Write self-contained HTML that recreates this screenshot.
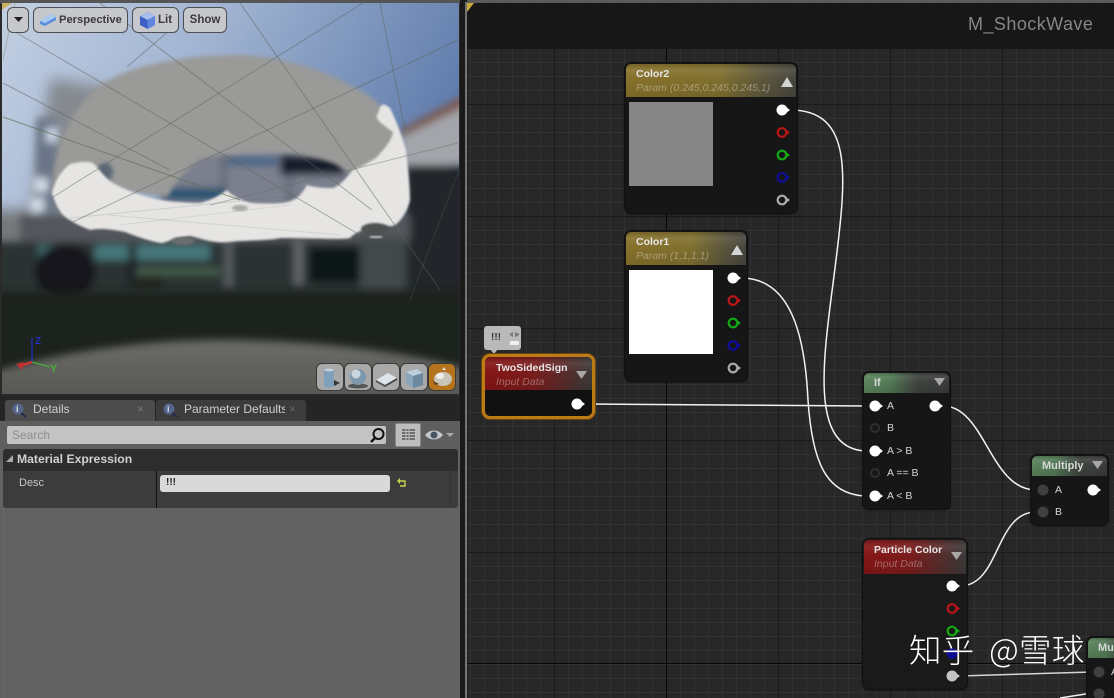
<!DOCTYPE html>
<html><head><meta charset="utf-8"><style>
html,body{margin:0;padding:0;width:1114px;height:698px;overflow:hidden;background:#1c1c1c}
*{box-sizing:border-box}
body{font-family:"Liberation Sans","Noto Sans CJK SC",sans-serif;position:relative}
.a{position:absolute}
.tb{position:absolute;top:7px;height:26px;background:#c6c8cc;border:1px solid #4c4f54;border-radius:6px;font-weight:bold;font-size:11.5px;color:#3a3a3a;line-height:24px}
.vb{position:absolute;top:364px;width:26px;height:26px;background:#a9a9a9;border-radius:5px;box-shadow:0 0 0 1px #3a3a3a}
.node{position:absolute;background:#161616;border-radius:6px;box-shadow:0 0 0 1px #101010,0 1px 3px rgba(0,0,0,.5)}
.hd{position:absolute;left:1px;right:1px;top:1px;border-radius:5px 5px 0 0;overflow:hidden}
.hd:after{content:"";position:absolute;left:0;right:0;top:0;height:100%;background:linear-gradient(180deg,rgba(0,0,0,.12),rgba(255,255,255,.08) 18%,rgba(255,255,255,0) 45%,rgba(0,0,0,.1) 100%)}
.gold{background:linear-gradient(90deg,#87712a,#80702f 55%,#5b553d 82%,#47453f)}
.red{background:linear-gradient(90deg,#861616,#7a1c1c 45%,#4f3030 82%,#3d3a3a)}
.green{background:linear-gradient(90deg,#5b835b,#527a56 30%,#3f443f 62%,#3a3a3a)}
.t{position:absolute;font-weight:bold;font-size:10.5px;color:#e6e6e6;white-space:nowrap;z-index:2}
.s{position:absolute;font-style:italic;font-size:10.5px;color:rgba(255,255,255,.34);white-space:nowrap;z-index:2}
.l{position:absolute;font-size:10.5px;color:#d6d6d6;white-space:nowrap;z-index:5}
</style></head><body>

<!-- Viewport -->
<svg class="a" style="left:0;top:0" width="461" height="396" viewBox="0 0 461 396">
<defs>
<linearGradient id="sky" x1="0" y1="0" x2="1" y2="0.35"><stop offset="0" stop-color="#c3d0e3"/><stop offset=".45" stop-color="#a0b3d1"/><stop offset="1" stop-color="#5e7bab"/></linearGradient>
<linearGradient id="gnd" x1="0" y1="0" x2="0" y2="1"><stop offset="0" stop-color="#6c6c67"/><stop offset=".6" stop-color="#5b5b57"/><stop offset="1" stop-color="#4f4f4c"/></linearGradient>
<filter id="b8" x="-40%" y="-40%" width="180%" height="180%"><feGaussianBlur stdDeviation="7"/></filter>
<filter id="b4" x="-30%" y="-30%" width="160%" height="160%"><feGaussianBlur stdDeviation="4"/></filter>
<filter id="b2" x="-20%" y="-20%" width="140%" height="140%"><feGaussianBlur stdDeviation="2"/></filter>
<filter id="b1" x="-10%" y="-10%" width="120%" height="120%"><feGaussianBlur stdDeviation="1"/></filter>
<clipPath id="vp"><rect x="2" y="3" width="457" height="391"/></clipPath>
</defs>
<rect width="461" height="396" fill="#2a2a2a"/>
<g clip-path="url(#vp)">
<rect x="0" y="0" width="461" height="300" fill="url(#sky)"/>
<g filter="url(#b8)">
<path d="M50 78L110 88 120 200 80 250 30 215Z" fill="#858a90"/>
<path d="M-20 210H60V260H-20Z" fill="#74787a"/>
</g>
<g filter="url(#b4)">
<rect x="36" y="118" width="20" height="100" fill="#6a7688"/>
<rect x="46" y="128" width="12" height="14" fill="#c9d5e6"/>
<rect x="34" y="178" width="14" height="14" fill="#d0dbe8"/>
<rect x="30" y="198" width="14" height="14" fill="#d0dbe8"/>
<path d="M400 130L470 92 470 104 402 138Z" fill="#7c584e"/>
<path d="M400 138L470 104 470 162 405 170Z" fill="#a2a5aa"/>
<path d="M405 165H480V320H405Z" fill="#22272b"/>
<path d="M20 215H410V245H20Z" fill="#53575c"/>
<path d="M-20 242H410V320H-20Z" fill="#2b3033"/>
<path d="M160 150H360V215H160Z" fill="#7b808e"/>
<rect x="220" y="150" width="7" height="60" fill="#666c7a"/>
<rect x="286" y="150" width="7" height="60" fill="#666c7a"/>
<rect x="228" y="158" width="50" height="7" fill="#2d5d85"/>
<rect x="165" y="188" width="60" height="12" fill="#164f70"/>
<rect x="280" y="155" width="65" height="20" fill="#141e2a"/>
<rect x="38" y="245" width="20" height="12" fill="#3f6a6c"/>
<rect x="95" y="245" width="115" height="15" fill="#46777a"/>
<rect x="135" y="268" width="85" height="7" fill="#46604f"/>
<rect x="128" y="245" width="9" height="42" fill="#1a2020" opacity=".7"/>
<rect x="224" y="240" width="9" height="48" fill="#565c60"/>
<rect x="294" y="240" width="9" height="45" fill="#63676b"/>
<rect x="310" y="248" width="50" height="34" fill="#0f1315"/>
<rect x="360" y="238" width="45" height="52" fill="#42484c"/>
<ellipse cx="65" cy="272" rx="30" ry="28" fill="#12171a"/>
<ellipse cx="150" cy="282" rx="16" ry="7" fill="#20261f"/>
</g>
<path d="M-20 292H481V380H-20Z" fill="#1e231f" filter="url(#b4)"/>
<path d="M-20 376C60 350 160 338 240 340 330 342 410 352 481 372V416H-20Z" fill="url(#gnd)" filter="url(#b4)"/>
<!-- gray dome -->
<path d="M52 192C54 150 68 112 100 85C125 68 175 55 240 55C290 56 345 78 375 100C392 118 402 140 405 165L370 175 347 172C335 160 300 153 283 153 250 153 215 153 200 160C185 170 175 182 168 196L110 190 60 198Z" fill="#9a9a98" filter="url(#b2)"/>
<ellipse cx="105" cy="172" rx="8" ry="9" fill="#5a6676" filter="url(#b2)"/>
<!-- white band -->
<path d="M52 193C55 180 62 170 70 164 78 162 88 161 93 163 100 170 105 178 113 183 125 190 145 197 160 200 175 202 190 203 200 203 212 200 220 195 227 190 233 197 245 202 253 203 270 204 285 204 293 200 300 197 304 190 307 185 312 187 322 188 333 188 342 185 348 175 353 170 365 165 373 160 377 157 385 148 392 140 393 132 386 127 372 118 378 114 380 108 380 100 390 108 397 123 400 130 406 150 408 167 410 185 410 200 408 211 400 222 395 225 390 228 380 224 370 226 363 231 355 232 350 238 343 240 310 238 280 238 267 241 245 240 230 242 213 244 200 238 190 236 173 238 168 242 162 243 157 243 140 238 125 232 110 229 100 228 90 230 83 227 70 222 62 214 57 207 54 200 52 193 52 193Z" fill="#e6e5e3" filter="url(#b1)"/>
<ellipse cx="240" cy="208" rx="8" ry="3" fill="#a9a9a7" filter="url(#b1)"/>
<ellipse cx="375" cy="229" rx="14" ry="6" fill="#4d5252" filter="url(#b1)"/>
<ellipse cx="183" cy="241" rx="12" ry="4" fill="#6b6e6e" filter="url(#b1)"/>
<rect x="370" y="236" width="12" height="2" fill="#d8d8d8" filter="url(#b1)"/>
<!-- grid lines -->
<g fill="none" stroke="#5e645c" stroke-opacity=".5" stroke-width="1">
<path d="M17 33L360 235"/><path d="M100 3L372 210"/><path d="M240 3L440 290"/><path d="M380 3L405 130"/>
<path d="M363 3L53 197"/><path d="M458 40L60 228"/><path d="M3 83L170 170"/><path d="M170 30L127 67"/>
<path d="M458 143L210 205" stroke-opacity=".4"/><path d="M459 170L410 300" stroke-opacity=".3"/>
<path d="M108 215L340 235" stroke-opacity=".15"/><path d="M70 218L300 195" stroke-opacity=".18"/><path d="M120 225L290 205" stroke-opacity=".12"/>
<path d="M3 117L240 200" stroke="#586e4e" stroke-opacity=".65"/><path d="M15 3L3 60" stroke="#7d9372"/>
</g>
<!-- axes -->
<path d="M32 362V338" stroke="#1c2fc0" stroke-width="1.400"/><path d="M32 362L20 366" stroke="#d03030" stroke-width="2.400"/><path d="M32 362L50 367" stroke="#45b03a" stroke-width="1.200"/>
<text x="35" y="344" font-family="Liberation Sans" font-size="10" font-weight="bold" fill="#2030c0">Z</text>
<text x="50" y="372" font-family="Liberation Sans" font-size="11" font-weight="bold" fill="#45b03a">Y</text>
<path d="M16 364L24 362 22 370Z" fill="#c03030"/>
</g>
<path d="M2 3H12L2 10Z" fill="#c9a93c" opacity=".8"/>
</svg>
<div class="a" style="left:0;top:0;width:461px;height:3px;background:#555"></div>

<div class="tb" style="left:7px;width:22px"><svg class="a" style="left:5px;top:9px" width="11" height="6"><path d="M1 0H10L5.500 5Z" fill="#222"/></svg></div>
<div class="tb" style="left:33px;width:95px;padding-left:25px;font-size:11.2px">Perspective<svg class="a" style="left:5px;top:5px" width="18" height="14" viewBox="0 0 18 14"><path d="M1 8L12 1 17 4 17 7 6 13 1 11Z" fill="#5b90da"/><path d="M1 8L12 1 17 4 6 10Z" fill="#a9cbf0"/></svg></div>
<div class="tb" style="left:132px;width:47px;padding-left:25px">Lit<svg class="a" style="left:6px;top:3px" width="17" height="19" viewBox="0 0 17 19"><path d="M8.500 1L16 5V14L8.500 18 1 14V5Z" fill="#3e5fc4"/><path d="M8.500 1L16 5 8.500 9 1 5Z" fill="#a8bdea"/><path d="M8.500 9L16 5V14L8.500 18Z" fill="#5f86dc"/></svg></div>
<div class="tb" style="left:183px;width:44px;text-align:center">Show</div>

<div class="vb" style="left:317px"><svg width="26" height="26"><path d="M7 6C9 4 15 4 17 6V22C15 24 9 24 7 22Z" fill="#7f9fbb"/><path d="M7 6C9 8 15 8 17 6 15 4 9 4 7 6Z" fill="#c3d2df"/><path d="M17 16L23 19 17 22Z" fill="#333"/></svg></div>
<div class="vb" style="left:345px"><svg width="26" height="26"><ellipse cx="13" cy="22" rx="10" ry="2.500" fill="#555"/><circle cx="13" cy="13" r="8" fill="#7d97ad"/><circle cx="11" cy="10" r="4.500" fill="#c9d6e0"/></svg></div>
<div class="vb" style="left:373px"><svg width="26" height="26"><path d="M3 16L15 9 24 14 12 21Z" fill="#dde4ea"/><path d="M3 16L12 21 12 23 3 18Z" fill="#555"/><path d="M12 21L24 14V16L12 23Z" fill="#444"/></svg></div>
<div class="vb" style="left:401px"><svg width="26" height="26"><path d="M5 8L16 5 22 9V21L12 24 5 19Z" fill="#8aa4ba"/><path d="M5 8L16 5 22 9 12 12Z" fill="#bccddb"/><path d="M12 12L22 9V21L12 24Z" fill="#6d889e"/></svg></div>
<div class="vb" style="left:429px;background:#b5741c"><svg width="26" height="26"><ellipse cx="14" cy="15" rx="9" ry="7" fill="#c9c5bb"/><ellipse cx="11" cy="12" rx="4" ry="3" fill="#eee"/><path d="M4 17L10 20 6 21Z" fill="#5a3d10"/><path d="M13 6L15 3 17 6Z" fill="#ddd"/></svg></div>

<!-- Details panel -->
<div class="a" style="left:0;top:396px;width:460px;height:302px;background:#626262">
  <div class="a" style="left:0;top:0;width:460px;height:25px;background:#252525"></div>
  <div class="a" style="left:5px;top:4px;width:150px;height:21px;background:#4c4c4c;border-radius:3px 3px 0 0"></div>
  <div class="a" style="left:156px;top:4px;width:150px;height:21px;background:#3c3c3c;border-radius:3px 3px 0 0"></div>
  <div class="a" style="left:0;top:25px;width:460px;height:28px;background:#5e5e5e"></div>
  <div class="a" style="left:33px;top:6px;font-size:12px;color:#cfcfcf">Details</div>
  <div class="a" style="left:184px;top:6px;width:101px;overflow:hidden;white-space:nowrap;font-size:12px;color:#cfcfcf">Parameter Defaults</div>
  <div class="a" style="left:137px;top:6px;font-size:12px;color:#777">×</div>
  <div class="a" style="left:289px;top:6px;font-size:12px;color:#666">×</div>
  <svg class="a" style="left:10px;top:5px" width="18" height="18"><circle cx="8" cy="8" r="5.500" fill="#55658c"/><text x="6" y="11" font-size="9" font-weight="bold" fill="#ddd" font-family="Liberation Sans">i</text><path d="M11 12L16 16" stroke="#1f2a50" stroke-width="2"/></svg>
  <svg class="a" style="left:161px;top:5px" width="18" height="18"><circle cx="8" cy="8" r="5.500" fill="#55658c"/><text x="6" y="11" font-size="9" font-weight="bold" fill="#ddd" font-family="Liberation Sans">i</text><path d="M11 12L16 16" stroke="#1f2a50" stroke-width="2"/></svg>

  <div class="a" style="left:7px;top:30px;width:379px;height:18px;background:#c3c3c3;border-radius:2px;font-size:12px;color:#8e8e8e;line-height:18px;padding-left:5px">Search</div>
  <svg class="a" style="left:369px;top:31px" width="17" height="17"><circle cx="9.500" cy="7" r="5" fill="none" stroke="#111" stroke-width="2"/><path d="M6 11L2 15" stroke="#111" stroke-width="2.400"/></svg>
  <div class="a" style="left:395px;top:27px;width:26px;height:24px;background:#bdbdbd;border:1px solid #8a8a8a;border-radius:2px"></div>
  <svg class="a" style="left:395px;top:27px" width="26" height="24"><g fill="#6d6d6d"><rect x="7" y="6" width="13" height="2"/><rect x="7" y="9" width="13" height="2"/><rect x="7" y="12" width="13" height="2"/><rect x="7" y="15" width="13" height="2"/></g><path d="M11 6V17M14 6V17" stroke="#bdbdbd"/></svg>
  <svg class="a" style="left:424px;top:32px" width="32" height="14"><path d="M1 7C6 1 14 1 19 7 14 13 6 13 1 7Z" fill="#c3c7cc"/><circle cx="10" cy="7" r="3.500" fill="#4a5564"/><path d="M22 5H30L26 9Z" fill="#aaa"/></svg>

  <div class="a" style="left:3px;top:53px;width:455px;height:22px;background:#2d2d2d;border-radius:3px 3px 0 0"></div>
  <svg class="a" style="left:6px;top:58px" width="9" height="10"><path d="M7 1V8H0Z" fill="#aaa"/></svg>
  <div class="a" style="left:17px;top:56px;font-size:12.2px;font-weight:bold;color:#d0d0d0;white-space:nowrap">Material Expression</div>
  <div class="a" style="left:3px;top:75px;width:455px;height:37px;background:#3c3c3c;border-radius:0 0 3px 3px"></div>
  <div class="a" style="left:156px;top:75px;width:1px;height:37px;background:#111"></div>
  <div class="a" style="left:450px;top:75px;width:1px;height:37px;background:#333"></div>
  <div class="a" style="left:3px;top:112px;width:1px;height:190px;background:#676767"></div>
  <div class="a" style="left:450px;top:112px;width:1px;height:190px;background:#676767"></div>
  <div class="a" style="left:19px;top:81px;font-size:11px;color:#c8c8c8">Desc</div>
  <div class="a" style="left:160px;top:79px;width:230px;height:17px;background:#d9d9d9;border-radius:3px;font-size:10px;font-weight:bold;color:#222;line-height:15px;padding-left:6px">!!!</div>
  <svg class="a" style="left:397px;top:82px" width="10" height="10"><path d="M1 3H8V8H3" fill="none" stroke="#c9d24a" stroke-width="1.400"/><path d="M0 3L3 0V6Z" fill="#c9d24a"/></svg>
</div>
<div class="a" style="left:460px;top:0;width:5px;height:698px;background:#1a1a1a"></div>
<div class="a" style="left:465px;top:2px;width:2px;height:696px;background:#737373"></div>

<!-- Graph -->
<svg class="a" style="left:467px;top:0" width="647" height="698" viewBox="467 0 647 698" shape-rendering="crispEdges">
<defs>
<pattern id="minor" x="22" y="20" width="14" height="14" patternUnits="userSpaceOnUse"><rect width="14" height="14" fill="#272727"/><path d="M0 .5H14M.5 0V14" stroke="#313131" stroke-width="1"/></pattern>
</defs>
<rect x="467" y="0" width="647" height="698" fill="url(#minor)"/>
<g stroke="#1a1a1a" stroke-width="1"><path d="M554.500 0V698M778.500 0V698M890.500 0V698M1002.500 0V698"/><path d="M467 104.500H1114M467 216.500H1114M467 328.500H1114M467 440.500H1114M467 552.500H1114"/></g>
<g stroke="#070707" stroke-width="1"><path d="M666.500 0V698M467 663.500H1114"/></g>
<rect x="467" y="3" width="647" height="46" fill="#171717" opacity=".93"/>
<rect x="467" y="0" width="647" height="3" fill="#5a5a5a"/>
<path d="M467 3H474L467 12Z" fill="#c9a93c" shape-rendering="auto"/>
<g fill="none" stroke="#f2f2f2" stroke-width="1.500" shape-rendering="auto">
<path d="M790 110C852 110 847 172 836 260C825 350 805 451 868 451"/>
<path d="M741 278C792 278 805 338 808 400C812 460 825 496 868 496"/>
<path d="M585 404L868 406"/>
<path d="M943 406C985 406 990 490 1036 490"/>
<path d="M960 586C1000 586 995 512 1036 512"/>
<path d="M960 676L1092 672" stroke="#d6d6d6"/>
<path d="M1060 698L1092 693"/>
</g>
</svg>
<div class="a" style="left:968px;top:14px;font-size:18px;color:#868686;white-space:nowrap;letter-spacing:.45px">M_ShockWave</div>

<!-- Color2 -->
<div class="node" style="left:625px;top:63px;width:172px;height:150px"><div class="hd gold" style="height:33px"></div>
<div class="t" style="left:11px;top:5px">Color2</div><div class="s" style="left:11px;top:19px">Param (0.245,0.245,0.245,1)</div>
<div class="a" style="left:4px;top:39px;width:84px;height:84px;background:#858585"></div></div>
<!-- Color1 -->
<div class="node" style="left:625px;top:231px;width:122px;height:150px"><div class="hd gold" style="height:33px"></div>
<div class="t" style="left:11px;top:5px">Color1</div><div class="s" style="left:11px;top:19px">Param (1,1,1,1)</div>
<div class="a" style="left:4px;top:39px;width:84px;height:84px;background:#fff"></div></div>
<!-- Comment bubble -->
<div class="a" style="left:484px;top:326px;width:37px;height:24px;background:#b9b9b9;border-radius:3px;font-size:10px;font-weight:bold;color:#333;line-height:24px;padding-left:7px">!!!</div>
<svg class="a" style="left:488px;top:349px" width="12" height="6"><path d="M2 0H10L6 5Z" fill="#b9b9b9"/></svg>
<svg class="a" style="left:509px;top:329px" width="11" height="18"><path d="M1 5L4 3V8L1 6ZM10 5L6 3V8L10 6Z" fill="#777"/><rect x="1" y="12" width="9" height="4" fill="#eee"/></svg>
<!-- TwoSidedSign -->
<div class="node" style="left:482px;top:354px;width:113px;height:65px;border:3px solid #bd7b18;border-radius:8px;box-shadow:0 0 0 1px #6b4510"></div>
<div class="node" style="left:485px;top:357px;width:107px;height:59px;box-shadow:none;border-radius:5px;background:#111"><div class="hd red" style="height:33px;left:0;right:0;top:0"></div>
<div class="t" style="left:11px;top:5px">TwoSidedSign</div><div class="s" style="left:11px;top:19px">Input Data</div></div>
<!-- If -->
<div class="node" style="left:863px;top:372px;width:87px;height:137px"><div class="hd green" style="height:20px"></div><div class="t" style="left:11px;top:5px;color:#d8d8d8;font-size:11px">If</div></div>
<!-- Multiply -->
<div class="node" style="left:1031px;top:455px;width:77px;height:70px"><div class="hd green" style="height:20px"></div><div class="t" style="left:11px;top:5px;font-size:11px;color:#d8d8d8">Multiply</div></div>
<!-- Particle -->
<div class="node" style="left:863px;top:539px;width:104px;height:150px;background:#1a1a1a"><div class="hd red" style="height:34px"></div>
<div class="t" style="left:11px;top:5px">Particle Color</div><div class="s" style="left:11px;top:19px">Input Data</div></div>
<!-- Mul -->
<div class="node" style="left:1087px;top:637px;width:60px;height:70px"><div class="hd green" style="height:20px"></div><div class="t" style="left:11px;top:5px;font-size:11px;color:#d8d8d8">Multiply</div></div>

<div class="l" style="left:887px;top:400px">A</div><div class="l" style="left:887px;top:422px">B</div><div class="l" style="left:887px;top:445px">A &gt; B</div><div class="l" style="left:887px;top:467px">A == B</div><div class="l" style="left:887px;top:490px">A &lt; B</div>
<div class="l" style="left:1055px;top:484px">A</div><div class="l" style="left:1055px;top:506px">B</div>
<div class="l" style="left:1111px;top:666px">A</div>

<!-- Pins and arrows -->
<svg class="a" style="left:0;top:0;z-index:6" width="1114" height="698">
<g fill="#d4d4d4"><path d="M781 87H793L787 77Z"/><path d="M731 255H743L737 245Z"/></g>
<g fill="#a8a8a8"><path d="M576 371H587L581.500 379Z"/><path d="M934 378H945L939.500 386Z"/><path d="M1092 461H1103L1097.500 469Z"/><path d="M951 552H962L956.500 560Z"/></g>
<g fill="#fff">
<circle cx="782" cy="110" r="5.500"/><path d="M786 107L790 110 786 113Z"/>
<circle cx="733" cy="278" r="5.500"/><path d="M737 275L741 278 737 281Z"/>
<circle cx="577" cy="404" r="5.500"/><path d="M581 401L585 404 581 407Z"/>
<circle cx="875" cy="406" r="5.500"/><path d="M879 403L883 406 879 409Z"/>
<circle cx="935" cy="406" r="5.500"/><path d="M939 403L943 406 939 409Z"/>
<circle cx="875" cy="451" r="5.500"/><path d="M879 448L883 451 879 454Z"/>
<circle cx="875" cy="496" r="5.500"/><path d="M879 493L883 496 879 499Z"/>
<circle cx="1093" cy="490" r="5.500"/><path d="M1097 487L1101 490 1097 493Z"/>
<circle cx="952" cy="586" r="5.500"/><path d="M956 583L960 586 956 589Z"/>
</g>
<circle cx="952" cy="676" r="5.500" fill="#c4c4c4"/><path d="M956 673L960 676 956 679Z" fill="#c4c4c4"/>
<g fill="none" stroke-width="2.200">
<g stroke="#b81616"><circle cx="782" cy="132.500" r="4.300"/><circle cx="733" cy="300.500" r="4.300"/><circle cx="952" cy="608.500" r="4.300"/></g>
<g stroke="#14a814"><circle cx="782" cy="155" r="4.300"/><circle cx="733" cy="323" r="4.300"/><circle cx="952" cy="631" r="4.300"/></g>
<g stroke="#0e0e98"><circle cx="782" cy="177.500" r="4.300"/><circle cx="733" cy="345.500" r="4.300"/><circle cx="952" cy="653.500" r="4.300"/></g>
<g stroke="#aaa"><circle cx="782" cy="200" r="4.300"/><circle cx="733" cy="368" r="4.300"/></g>
</g>
<g fill="#b81616"><path d="M786 129.500L790 132.500 786 135.500Z"/><path d="M737 297.500L741 300.500 737 303.500Z"/><path d="M956 605.500L960 608.500 956 611.500Z"/></g>
<g fill="#14a814"><path d="M786 152L790 155 786 158Z"/><path d="M737 320L741 323 737 326Z"/><path d="M956 628L960 631 956 634Z"/></g>
<g fill="#0e0e98"><path d="M786 174.500L790 177.500 786 180.500Z"/><path d="M737 342.500L741 345.500 737 348.500Z"/></g>
<g fill="#aaa"><path d="M786 197L790 200 786 203Z"/><path d="M737 365L741 368 737 371Z"/></g>
<circle cx="952" cy="653.500" r="4" fill="#0c0c90"/>
<g fill="none" stroke="#2e2e2e" stroke-width="2"><circle cx="875" cy="428" r="4"/><circle cx="875" cy="473" r="4"/></g>
<g fill="#3f3f3f"><circle cx="1043" cy="490" r="5.500"/><circle cx="1043" cy="512" r="5.500"/><circle cx="1099" cy="672" r="5.500"/><circle cx="1099" cy="694" r="5.500"/></g>
</svg>

<!-- Watermark -->
<div class="a" style="left:909px;top:628px;z-index:8;font-family:'Noto Sans CJK SC','WenQuanYi Zen Hei',sans-serif;font-weight:300;font-size:32.5px;line-height:42px;color:#fff;white-space:nowrap;word-spacing:7px;letter-spacing:.3px">知乎 @雪球</div>
</body></html>
